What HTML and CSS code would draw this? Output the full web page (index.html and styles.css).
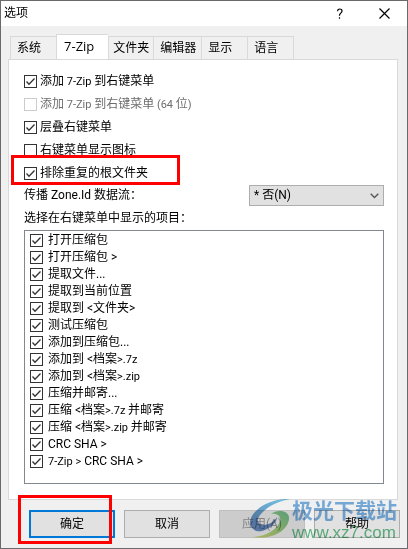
FILE: index.html
```html
<!DOCTYPE html>
<html lang="zh-CN">
<head>
  <meta charset="UTF-8" />
  <meta name="viewport" content="width=device-width, initial-scale=1" />
  <title>选项</title>
  <link rel="stylesheet" href="styles.css">
</head>
<body>
  <div class="window">
    <header class="titlebar">
      <h1>选项</h1>
      <button type="button" class="title-btn" aria-label="帮助">
        <svg width="10" height="12" viewBox="0 0 10 12"><path d="M2.6 3.2C2.6 1.6 3.6 1 4.8 1s2.2.7 2.2 2c0 2-2.500 2.200-2.500 4.300v.4M4.500 9.200v1.600" fill="none" stroke="#000" stroke-width="1.200"/></svg>
      </button>
      <button type="button" class="title-btn" aria-label="关闭">
        <svg width="11" height="11" viewBox="0 0 11 11"><path d="M.5.5l10 10M10.500.5l-10 10" stroke="#000" stroke-width="1.200"/></svg>
      </button>
    </header>

    <main>
      <div class="tabs" role="tablist">
        <button type="button" role="tab" class="tab">系统</button>
        <button type="button" role="tab" class="tab active" aria-selected="true">7-Zip</button>
        <button type="button" role="tab" class="tab">文件夹</button>
        <button type="button" role="tab" class="tab">编辑器</button>
        <button type="button" role="tab" class="tab">显示</button>
        <button type="button" role="tab" class="tab">语言</button>
      </div>

      <section class="panel">
        <div class="options">
          <label><input type="checkbox" checked><span>添加<span class="en"> 7-Zip </span>到右键菜单</span></label>
          <label class="disabled"><input type="checkbox" disabled><span>添加<span class="en"> 7-Zip </span>到右键菜单<span class="en"> (64 </span>位<span class="en">)</span></span></label>
          <label><input type="checkbox" checked>层叠右键菜单</label>
          <label><input type="checkbox">右键菜单显示图标</label>
          <label class="marked"><input type="checkbox" checked>排除重复的根文件夹</label>
        </div>
        <div class="zone">
          <label for="zone">传播 Zone.Id 数据流：</label>
          <select id="zone">
            <option>* 否(N)</option>
          </select>
        </div>
        <p class="list-title">选择在右键菜单中显示的项目：</p>
        <div class="list">
          <label><input type="checkbox" checked>打开压缩包</label>
          <label><input type="checkbox" checked>打开压缩包 &gt;</label>
          <label><input type="checkbox" checked>提取文件...</label>
          <label><input type="checkbox" checked>提取到当前位置</label>
          <label><input type="checkbox" checked>提取到 &lt;文件夹&gt;</label>
          <label><input type="checkbox" checked>测试压缩包</label>
          <label><input type="checkbox" checked>添加到压缩包...</label>
          <label><input type="checkbox" checked><span>添加到 &lt;档案<span class="en">&gt;.7z</span></span></label>
          <label><input type="checkbox" checked><span>添加到 &lt;档案<span class="en">&gt;.zip</span></span></label>
          <label><input type="checkbox" checked>压缩并邮寄...</label>
          <label><input type="checkbox" checked><span>压缩 &lt;档案<span class="en">&gt;.7z </span>并邮寄</span></label>
          <label><input type="checkbox" checked><span>压缩 &lt;档案<span class="en">&gt;.zip </span>并邮寄</span></label>
          <label><input type="checkbox" checked>CRC SHA &gt;</label>
          <label><input type="checkbox" checked><span><span class="en">7-Zip &gt;</span> CRC SHA &gt;</span></label>
        </div>
      </section>
    </main>

    <footer class="buttons">
      <button type="button" class="btn primary">确定</button>
      <button type="button" class="btn">取消</button>
      <button type="button" class="btn" disabled>应用(A)</button>
      <button type="button" class="btn">帮助</button>
      <div class="watermark">
        <svg width="42" height="40" viewBox="0 0 42 40">
          <defs>
            <linearGradient id="wave" x1="0" y1="1" x2="1" y2="0">
              <stop offset="0" stop-color="#3f6fb5"/>
              <stop offset="1" stop-color="#5cc4ea"/>
            </linearGradient>
            <linearGradient id="leaf" x1="0" y1="1" x2="1" y2="0">
              <stop offset="0" stop-color="#d3dc52"/>
              <stop offset="1" stop-color="#4fb87a"/>
            </linearGradient>
          </defs>
          <path d="M40 0C20-1 1 11 0 23c0 4 2 7 6 8C4 19 15 5 40 0z" fill="url(#wave)"/>
          <path d="M1 25c1 8 9 9 16 5 6-3 10-8 10-12-3 5-9 8-13 8-5 0-7-3-6-9z" fill="#4676bb"/>
          <path d="M21 15c6-5 19-4 18 5C38 31 24 41 2 38c14 0 26-8 28-16 1-5-3-8-9-7z" fill="url(#leaf)"/>
        </svg>
        <div>
          <div class="site-name">极光下载站</div>
          <div class="site-url">www.xz7.com</div>
        </div>
      </div>
    </footer>
  </div>
</body>
</html>
```
FILE: styles.css
```css
*,
*::after {
  box-sizing: border-box;
}
body {
  margin: 0;
  font-family: Roboto, "Noto Sans CJK SC", sans-serif;
  font-size: 12px;
  line-height: 17px;
  color: #000;
}
button, select, input {
  font: inherit;
  color: inherit;
  margin: 0;
}
.en {
  font-size: 11px;
  white-space: pre;
}
.window {
  display: flex;
  flex-direction: column;
  min-height: 100vh;
  background: #f0f0f0;
  border: 1px solid #6b696b;
}
.titlebar {
  display: flex;
  align-items: center;
  height: 25px;
  padding: 0 11px 0 3px;
  background: #fff;
}
.titlebar h1 {
  flex: 1;
  margin: 0;
  font-size: 12px;
  font-weight: 400;
}
.title-btn {
  display: flex;
  justify-content: center;
  width: 23px;
  padding: 0;
  margin-left: 22px;
  border: 0;
  background: none;
}
main {
  flex: 1;
  display: flex;
  flex-direction: column;
  padding: 8px 9px 0 7px;
}
.tabs {
  display: flex;
  align-items: flex-end;
  padding-left: 2px;
}
.tab {
  height: 23px;
  padding: 0 15px 0 6px;
  border: 1px solid #d9d9d9;
  border-right: 0;
  border-bottom: 0;
  background: #f0f0f0;
}
.tab:nth-child(3) {
  padding: 0 4px;
}
.tab:nth-child(4) {
  padding-right: 5px;
}
.tab:last-child {
  border-right: 1px solid #d9d9d9;
}
.tab.active {
  height: 26px;
  margin-bottom: -1px;
  padding: 0 14px 2px 7px;
  font-family: "Open Sans", sans-serif;
  font-size: 13px;
  background: #fff;
}
.panel {
  flex: 1;
  display: flex;
  flex-direction: column;
  padding: 10px 13px 15px 15px;
  border: 1px solid #d9d9d9;
  background: #fff;
}
.options label,
.list label {
  display: flex;
  align-items: center;
}
.options label {
  height: 23px;
  gap: 3px;
}
.disabled {
  color: #6d6d6d;
}
input[type="checkbox"] {
  appearance: none;
  flex: none;
  width: 13px;
  height: 13px;
  border: 1px solid #333;
  background: #fff center no-repeat;
}
input[type="checkbox"]:checked {
  background-image: url("data:image/svg+xml,%3Csvg xmlns='http://www.w3.org/2000/svg' width='11' height='11'%3E%3Cpath d='M1.500 5.500l2.500 2.700 5.500-5.700' fill='none' stroke='%23333' stroke-width='1.300'/%3E%3C/svg%3E");
}
input[type="checkbox"]:disabled {
  border-color: #ccc;
}
.marked {
  position: relative;
}
.marked::after {
  content: "";
  position: absolute;
  top: -7px;
  left: -13px;
  width: 169px;
  height: 30px;
  border: 3px solid #f00;
}
.zone {
  display: flex;
  align-items: center;
  justify-content: space-between;
  height: 21px;
}
.zone select {
  appearance: none;
  width: 135px;
  height: 21px;
  padding: 0 4px;
  border: 1px solid #adadad;
  border-radius: 0;
  background: #e1e1e1 url("data:image/svg+xml,%3Csvg xmlns='http://www.w3.org/2000/svg' width='9' height='6'%3E%3Cpath d='M.7.7l3.800 3.800L8.300.7' fill='none' stroke='%23555' stroke-width='1.300'/%3E%3C/svg%3E") right 4px center no-repeat;
}
.list-title {
  margin: 0;
  line-height: 24px;
}
.list {
  flex: 1;
  padding: 1px 5px;
  border: 1px solid #828790;
}
.list label {
  height: 17px;
  gap: 5px;
}
.buttons {
  position: relative;
  display: flex;
  justify-content: flex-end;
  gap: 9px;
  padding: 10px 7px;
}
.btn {
  width: 86px;
  height: 28px;
  padding: 0;
  border: 1px solid #adadad;
  background: #e1e1e1;
}
.btn:disabled {
  border-color: #bfbfbf;
  background: #ccc;
  color: #838383;
}
.primary {
  position: relative;
  border: 2px solid #0078d7;
}
.primary::after {
  content: "";
  position: absolute;
  top: -17px;
  left: -13px;
  width: 94px;
  height: 49px;
  border: 3px solid #f00;
}
.watermark {
  position: absolute;
  right: 10px;
  bottom: 5px;
  display: flex;
  opacity: 0.8;
  mix-blend-mode: multiply;
  pointer-events: none;
}
.site-name {
  font-size: 21px;
  font-weight: 700;
  line-height: 24px;
  color: #5b9fdc;
}
.site-url {
  font-family: "Liberation Sans", sans-serif;
  font-size: 17px;
  line-height: 20px;
  color: #3fae6a;
}
```
